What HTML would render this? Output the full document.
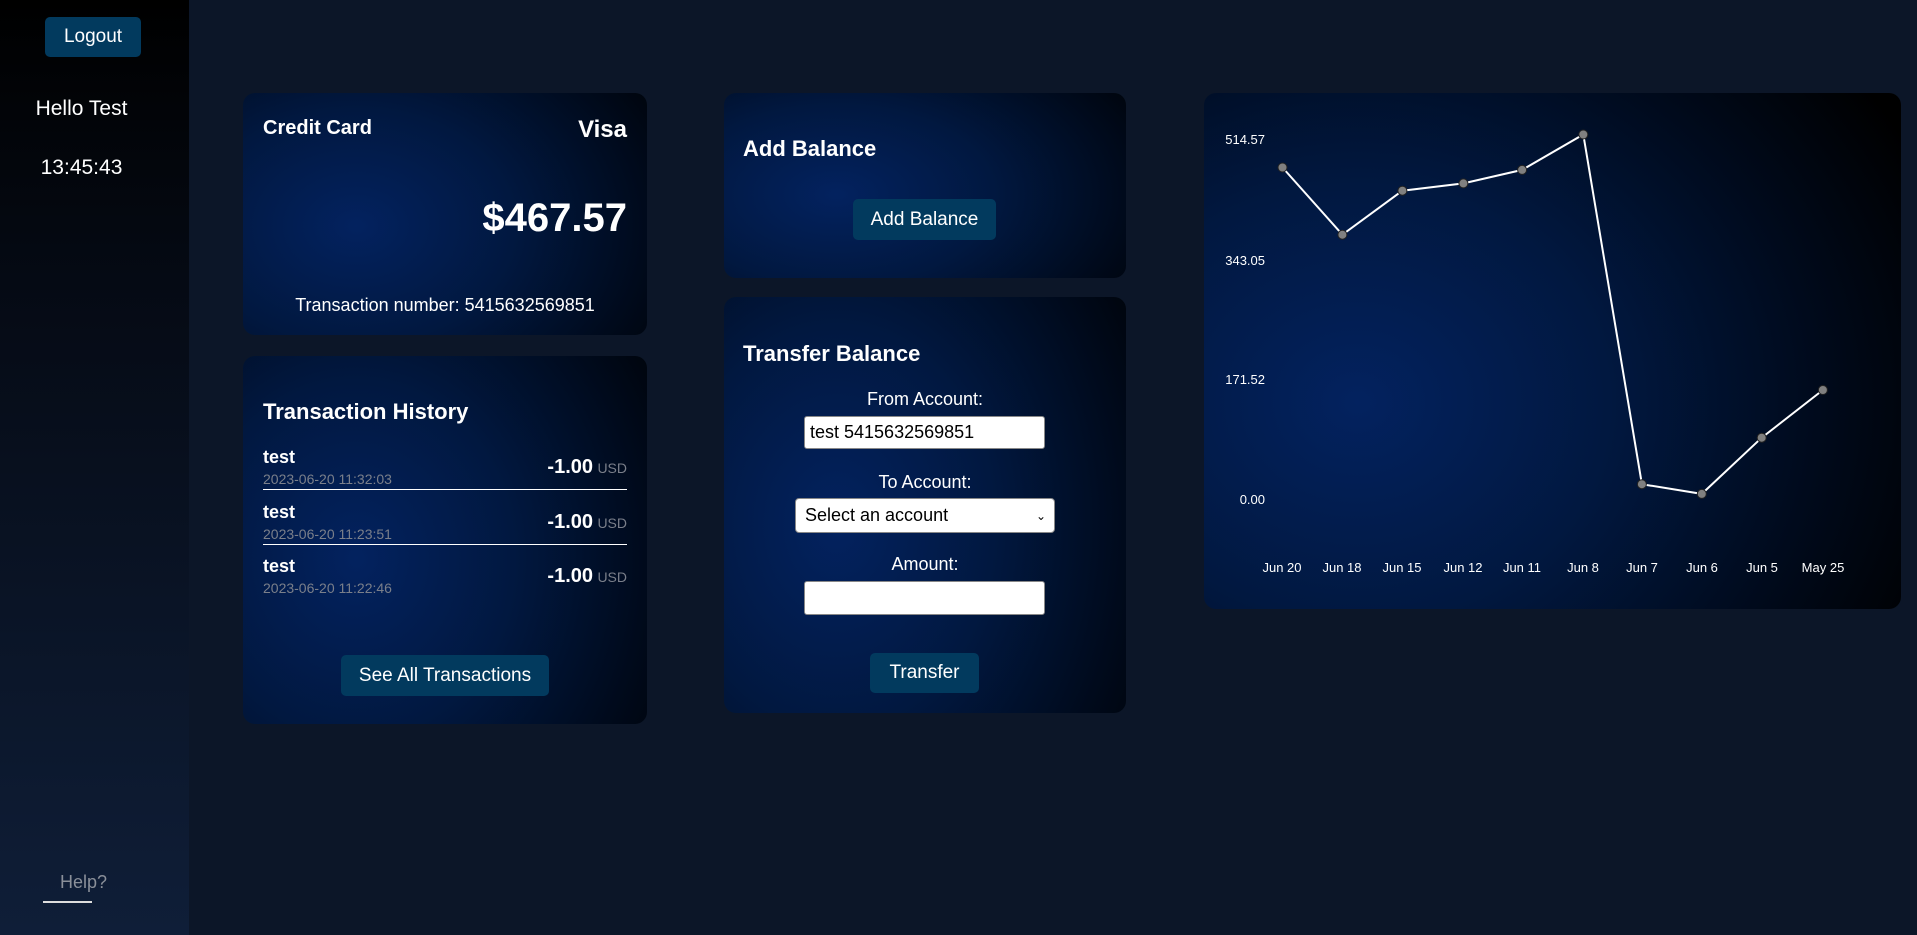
<!DOCTYPE html>
<html><head><meta charset="utf-8"><style>
*{margin:0;padding:0;box-sizing:border-box}
body{width:1917px;height:935px;background:#0c1628;font-family:"Liberation Sans",sans-serif;color:#fff;position:relative;overflow:hidden}
.abs{position:absolute}
.side{left:0;top:0;width:189px;height:935px;background:linear-gradient(180deg,#000 0%,#050a14 30%,#0f1e38 100%)}
.btn{position:absolute;background:#023a5e;border-radius:5px;color:#fff;font-size:19px;display:flex;align-items:center;justify-content:center}
.card{position:absolute;border-radius:12px;background:radial-gradient(130% 160% at 28% 55%,#03225f 0%,#011840 30%,#000a1c 55%,#000 75%)}
.b{font-weight:bold}
.inp{position:absolute;background:#fff;border:1px solid #888;border-radius:3px;color:#000;font-size:18px;padding-left:5px;display:flex;align-items:center}
.row{position:absolute;left:20px;width:364px;height:55px}
.row .t{position:absolute;left:0;top:0;font-size:18px;font-weight:bold}
.row .d{position:absolute;left:0;top:24px;font-size:14px;color:#7a7f8a}
.row .a{position:absolute;right:34px;top:9px;font-size:20px;font-weight:bold}
.row .u{position:absolute;right:0;top:13px;font-size:14px;color:#7a7f8a}
.row .l{position:absolute;left:0;right:0;top:42px;height:1px;background:#fff}
</style></head><body>
<div class="abs side"></div>
<div class="btn" style="left:45px;top:17px;width:96px;height:40px">Logout</div>
<div class="abs" style="left:0;width:163px;top:97px;text-align:center;font-size:21px">Hello Test</div>
<div class="abs" style="left:0;width:163px;top:156px;text-align:center;font-size:21px">13:45:43</div>
<div class="abs" style="left:60px;top:872px;font-size:18px;color:#8a8f99">Help?</div>
<div class="abs" style="left:43px;top:901px;width:49px;height:2px;background:#ddd"></div>

<div class="card" style="left:243px;top:93px;width:404px;height:242px">
 <div class="abs b" style="left:20px;top:24px;font-size:20px">Credit Card</div>
 <div class="abs b" style="right:20px;top:23px;font-size:24px">Visa</div>
 <div class="abs b" style="right:20px;top:103px;font-size:40px">$467.57</div>
 <div class="abs" style="left:0;right:0;top:202px;text-align:center;font-size:18px">Transaction number: 5415632569851</div>
</div>

<div class="card" style="left:243px;top:356px;width:404px;height:368px">
 <div class="abs b" style="left:20px;top:43px;font-size:22px">Transaction History</div>
 <div class="row" style="top:91px"><div class="t">test</div><div class="d">2023-06-20 11:32:03</div><div class="a">-1.00</div><div class="u">USD</div><div class="l"></div></div>
 <div class="row" style="top:146px"><div class="t">test</div><div class="d">2023-06-20 11:23:51</div><div class="a">-1.00</div><div class="u">USD</div><div class="l"></div></div>
 <div class="row" style="top:200px"><div class="t">test</div><div class="d">2023-06-20 11:22:46</div><div class="a">-1.00</div><div class="u">USD</div></div>
 <div class="btn" style="left:98px;top:299px;width:208px;height:41px">See All Transactions</div>
</div>

<div class="card" style="left:724px;top:93px;width:402px;height:185px">
 <div class="abs b" style="left:19px;top:43px;font-size:22px">Add Balance</div>
 <div class="btn" style="left:129px;top:106px;width:143px;height:41px">Add Balance</div>
</div>

<div class="card" style="left:724px;top:297px;width:402px;height:416px">
 <div class="abs b" style="left:19px;top:44px;font-size:22px">Transfer Balance</div>
 <div class="abs" style="left:0;right:0;top:92px;text-align:center;font-size:18px">From Account:</div>
 <div class="inp" style="left:80px;top:119px;width:241px;height:33px">test 5415632569851</div>
 <div class="abs" style="left:0;right:0;top:175px;text-align:center;font-size:18px">To Account:</div>
 <div class="inp" style="left:71px;top:201px;width:260px;height:35px;padding-left:9px;border-radius:4px">Select an account<span style="position:absolute;right:8px;font-size:12px">&#8964;</span></div>
 <div class="abs" style="left:0;right:0;top:257px;text-align:center;font-size:18px">Amount:</div>
 <div class="inp" style="left:80px;top:284px;width:241px;height:34px"></div>
 <div class="btn" style="left:146px;top:356px;width:109px;height:40px">Transfer</div>
</div>

<div class="card" style="left:1204px;top:93px;width:697px;height:516px;background:radial-gradient(120% 140% at 22% 60%,#03225f 0%,#011840 30%,#000a1c 55%,#000 75%)"></div>
<svg class="abs" style="left:0;top:0" width="1917" height="935">
 <g font-family="Liberation Sans, sans-serif" font-size="13" fill="#fff" text-anchor="end">
  <text x="1265" y="144">514.57</text>
  <text x="1265" y="265">343.05</text>
  <text x="1265" y="384">171.52</text>
  <text x="1265" y="504">0.00</text>
 </g>
 <g font-family="Liberation Sans, sans-serif" font-size="13" fill="#fff" text-anchor="middle">
  <text x="1282" y="572">Jun 20</text><text x="1342" y="572">Jun 18</text><text x="1402" y="572">Jun 15</text><text x="1463" y="572">Jun 12</text><text x="1522" y="572">Jun 11</text><text x="1583" y="572">Jun 8</text><text x="1642" y="572">Jun 7</text><text x="1702" y="572">Jun 6</text><text x="1762" y="572">Jun 5</text><text x="1823" y="572">May 25</text>
 </g>
 <polyline fill="none" stroke="#fff" stroke-width="2" points="1282.5,167.5 1342.4,234.7 1402.4,190.7 1463.4,183.4 1522.1,169.9 1583.3,134.5 1641.9,484.2 1701.8,493.9 1761.7,437.7 1822.9,390"/>
 <g fill="#808080" stroke="#222" stroke-width="1">
  <circle cx="1282.5" cy="167.5" r="4.5"/><circle cx="1342.4" cy="234.7" r="4.5"/><circle cx="1402.4" cy="190.7" r="4.5"/><circle cx="1463.4" cy="183.4" r="4.5"/><circle cx="1522.1" cy="169.9" r="4.5"/><circle cx="1583.3" cy="134.5" r="4.5"/><circle cx="1641.9" cy="484.2" r="4.5"/><circle cx="1701.8" cy="493.9" r="4.5"/><circle cx="1761.7" cy="437.7" r="4.5"/><circle cx="1822.9" cy="390" r="4.5"/>
 </g>
</svg>
</body></html>
